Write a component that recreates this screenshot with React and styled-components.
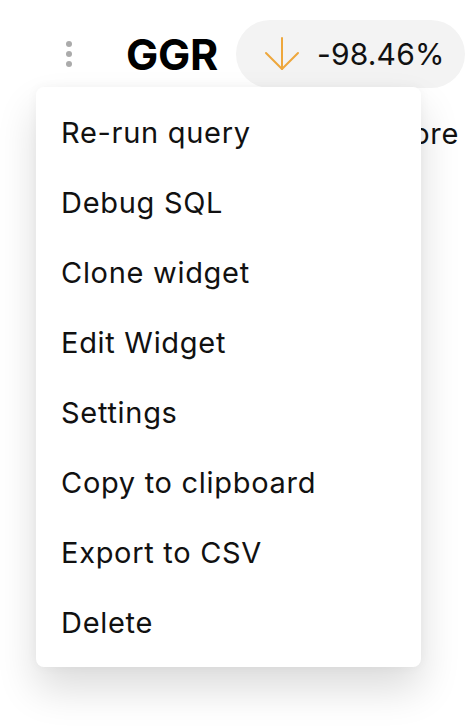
import React from 'react';
import styled, { createGlobalStyle } from 'styled-components';

const GlobalStyle = createGlobalStyle`
  html, body {
    margin: 0;
    padding: 0;
    background: #ffffff;
    font-family: Inter, "Noto Sans", sans-serif;
    color: #111111;
  }
`;

const Page = styled.div`
  position: relative;
  width: 474px;
  height: 726px;
  overflow: hidden;
  padding-top: 20px;
  box-sizing: border-box;
`;

const Header = styled.div`
  display: flex;
  align-items: center;
  padding-left: 66px;
`;

const MenuButton = styled.button`
  display: flex;
  flex-direction: column;
  gap: 4px;
  padding: 0;
  border: 0;
  background: none;
  margin-right: 54px;
  cursor: pointer;
`;

const Dot = styled.span`
  width: 6px;
  height: 6px;
  border-radius: 50%;
  background: #ababab;
`;

const Title = styled.h1`
  margin: 0 18px 0 0;
  font-size: 43px;
  font-weight: 700;
  letter-spacing: -0.3px;
  color: #000;
`;

const ChangePill = styled.div`
  display: flex;
  align-items: center;
  gap: 17px;
  height: 68px;
  padding: 0 20px 0 28px;
  border-radius: 34px;
  background: #f3f3f3;
`;

const ChangeValue = styled.span`
  font-size: 30px;
  letter-spacing: 0.2px;
  color: #111;
`;

const Body = styled.div`
  display: flex;
  justify-content: flex-end;
  padding: 28px 15px 0 0;
`;

const LinkText = styled.span`
  font-size: 29px;
  letter-spacing: 0.7px;
  color: #111;
`;

const Menu = styled.ul`
  position: absolute;
  top: 87px;
  left: 36px;
  width: 385px;
  margin: 0;
  padding: 10px 0;
  list-style: none;
  background: #fff;
  border-radius: 8px;
  box-shadow: 0 22px 40px rgba(0, 0, 0, 0.14), 0 0 12px rgba(0, 0, 0, 0.04);
`;

const MenuItem = styled.li`
  display: flex;
  align-items: center;
  height: 70px;
  padding-left: 25px;
  font-size: 29px;
  letter-spacing: 0.7px;
  color: #111;
  cursor: pointer;
`;

const DownArrow = () => (
  <svg width="36" height="34" viewBox="0 0 36 34" fill="none" stroke="#eea73c" strokeWidth="2" strokeLinecap="round" strokeLinejoin="round">
    <path d="M18 1v31" />
    <path d="M2 16l16 16 16-16" />
  </svg>
);

const items = [
  'Re-run query',
  'Debug SQL',
  'Clone widget',
  'Edit Widget',
  'Settings',
  'Copy to clipboard',
  'Export to CSV',
  'Delete',
];

export default function App() {
  return (
    <Page>
      <GlobalStyle />
      <Header>
        <MenuButton aria-label="Widget menu">
          <Dot />
          <Dot />
          <Dot />
        </MenuButton>
        <Title>GGR</Title>
        <ChangePill>
          <DownArrow />
          <ChangeValue>-98.46%</ChangeValue>
        </ChangePill>
      </Header>
      <Body>
        <LinkText>Explore</LinkText>
      </Body>
      <Menu>
        {items.map(item => (
          <MenuItem key={item}>{item}</MenuItem>
        ))}
      </Menu>
    </Page>
  );
}
